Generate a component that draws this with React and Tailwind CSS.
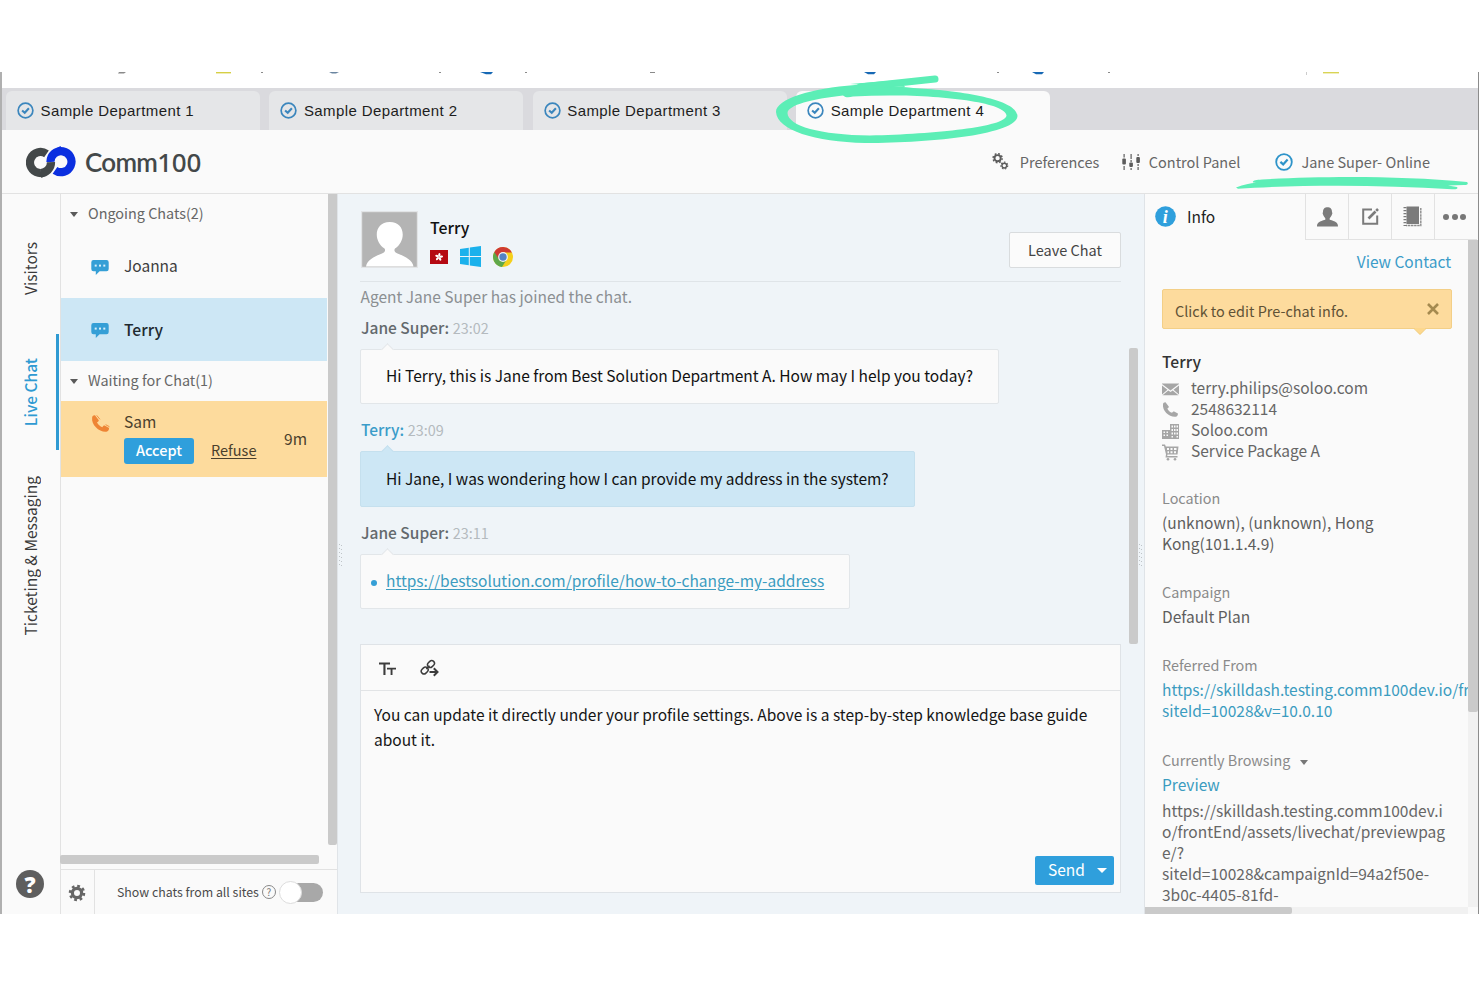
import React from "react";

const svg = "shrink-0 block";

function CheckCircle({ className }) {
  return (
    <svg viewBox="0 0 18 18" className={`${svg} ${className}`} fill="none" stroke="currentColor">
      <circle cx="9" cy="9" r="7.8" strokeWidth="1.8" />
      <path d="M5.4 8.9 L8.2 11.4 L12.6 6.6" strokeWidth="2.2" />
    </svg>
  );
}

function Gear({ cx, cy, r, w, n }) {
  const c = 2 * Math.PI * (r + w * 0.75);
  return (
    <g fill="none" stroke="currentColor">
      <circle cx={cx} cy={cy} r={r} strokeWidth={w} />
      <circle cx={cx} cy={cy} r={r + w * 0.75} strokeWidth={w * 0.8} strokeDasharray={`${c / n / 2} ${c / n / 2}`} />
    </g>
  );
}

function Logo() {
  return (
    <svg viewBox="0 0 50 33" className="block h-[33px] w-[50px] shrink-0">
      <g fill="none" strokeWidth="8.2">
        <path d="M20.5 8.9 A10.5 10.5 0 1 0 25 17.5" stroke="#434849" />
        <path d="M24.5 17 A10.5 10.5 0 0 1 35 6" stroke="#fafafa" strokeWidth="10.4" />
        <path d="M24.5 17 A10.5 10.5 0 1 1 29 25.3" stroke="#0b2fe0" />
        <path d="M14.5 28 A10.5 10.5 0 0 0 25 17.200" stroke="#fafafa" strokeWidth="10.4" />
        <path d="M14 28 A10.5 10.5 0 0 0 25 17.200" stroke="#434849" />
      </g>
      <path d="M14.5 31 L15.5 33 L20 30.5Z" fill="#434849" />
      <path d="M35.5 3 L34.5 1 L30 3.5Z" fill="#0b2fe0" />
    </svg>
  );
}

function ChatBubble() {
  return (
    <svg viewBox="0 0 18 16" className={`${svg} mt-px h-4 w-[18px]`}>
      <path d="M2.5 .5H15.5A2.2 2.2 0 0 1 17.7 2.7V9.6A2.2 2.2 0 0 1 15.5 11.8H8.6L4.8 15.4V11.8H2.5A2.2 2.2 0 0 1 .3 9.6V2.7A2.2 2.2 0 0 1 2.5 .5Z" fill="#359fd6" transform="translate(0 .5)" />
      <g fill="#d9effa">
        <rect x="3.7" y="5.6" width="2" height="2" />
        <rect x="8" y="5.6" width="2" height="2" />
        <rect x="12.3" y="5.6" width="2" height="2" />
      </g>
    </svg>
  );
}

function Phone({ className }) {
  return (
    <svg viewBox="0 0 20 20" className={`${svg} ${className}`} fill="currentColor">
      <path d="M1.2 3.6 C1.4 2.2 3 1.1 4.4 1.5 L8.2 6.6 C8.2 7.6 7.2 8.4 6.3 8.6 C7.4 11 9.6 13 12 13.9 C12.6 12.7 13.4 12 14.4 12.2 L19 14.7 C19 16.8 18 18.4 16.2 18.6 C9 19.4 0 11.5 1.2 3.6Z" />
      <path d="M6 1.4 L9.4 5.6 M15.4 11.2 L19.4 13.4" stroke="currentColor" strokeWidth="0.9" />
    </svg>
  );
}

function Caret({ className }) {
  return (
    <svg viewBox="0 0 8 4" className={`${svg} ${className}`} fill="currentColor" preserveAspectRatio="none">
      <path d="M0 0H8L4 4Z" />
    </svg>
  );
}

function TopRow() {
  return (
    <svg viewBox="0 0 1476 16" className="block h-4 w-full shrink-0">
      <path d="M117 0H124L122 1.5H116Z" fill="#8a8a8a" />
      <rect x="214" y="0" width="15" height="1.4" fill="#d6cf45" />
      <rect x="1321" y="0" width="16" height="1.4" fill="#d9d455" />
      <path d="M327 0H337L334 1.6H330Z" fill="#6a85a0" />
      <g fill="#1668b4">
        <path d="M478 0H491L489 2.2H484Z" />
        <path d="M862 0H874L872 2.2H866Z" />
        <path d="M1030 0H1042L1040 2.2H1034Z" />
      </g>
      <g fill="#8a8a8a">
        <rect x="259" width="2" height="1" />
        <rect x="437" width="2" height="1" />
        <rect x="523" width="2" height="1" />
        <rect x="648" width="5" height="1" />
        <rect x="995" width="2" height="1" />
        <rect x="1106" width="2" height="1" />
        <rect x="1304" width="1" height="3" fill="#ccc" />
      </g>
    </svg>
  );
}

const TABS = ["Sample Department 1", "Sample Department 2", "Sample Department 3", "Sample Department 4"];

function Tabs() {
  return (
    <div className="flex h-[42px] shrink-0 items-end gap-[9.4px] bg-[#dadade] pl-[4px]">
      {TABS.map((t, i) => (
        <div
          key={t}
          className={`flex h-[39px] w-[254px] shrink-0 items-center gap-[6.5px] rounded-t-[6px] pl-[11px] ${i === 3 ? "bg-[#fafafa]" : "bg-[#e5e6e8]"}`}
        >
          <CheckCircle className="size-[17px] text-[#3b86bd]" />
          <span className="pt-px font-['Liberation_Sans',sans-serif] text-[15px] tracking-[0.4px] whitespace-nowrap text-[#1d1d1d]">{t}</span>
        </div>
      ))}
    </div>
  );
}

function Header() {
  return (
    <header className="flex h-16 shrink-0 items-center border-b border-[#e2e2e2] pr-[48px] pl-[24px] text-[14.5px] text-[#666]">
      <Logo />
      <div className="mt-px ml-[9px] flex items-baseline text-[26px] leading-8 text-[#434849]">
        <span className="font-['Lato',sans-serif] font-semibold tracking-[-0.7px]">Comm</span>
        <span className="font-['Noto_Sans',sans-serif] font-medium tracking-[-0.3px]">100</span>
      </div>
      <div className="ml-auto flex items-center gap-[10.500px] leading-6">
        <svg viewBox="0 0 17 17" className={`${svg} size-[17px] text-[#5c5c5c]`}>
          <Gear cx={5.6} cy={5.2} r={3.1} w={1.9} n={8} />
          <Gear cx={12.3} cy={12.6} r={2.4} w={1.4} n={7} />
        </svg>
        <span>Preferences</span>
      </div>
      <div className="ml-[22.5px] flex items-center gap-[9px] leading-6">
        <svg viewBox="0 0 18 18" className={`${svg} size-[18px]`} fill="#5c5c5c">
          <path d="M1.500 1h1.2v3.500h-1.200zM1.500 13h1.200v4h-1.200zM8.500 1h1.200v5h-1.200zM8.500 7h1.200v2h-1.200zM8.500 15h1.200v2h-1.200zM15.500 1h1.200v2h-1.200zM15.500 11h1.200v2h-1.200zM15.500 14h1.200v3h-1.200z" />
          <rect x="0.3" y="5.500" width="3.6" height="6" rx="1" />
          <rect x="7.3" y="9.5" width="3.6" height="4.500" rx="1" />
          <rect x="14.3" y="4" width="3.6" height="6" rx="1" />
        </svg>
        <span>Control Panel</span>
      </div>
      <div className="ml-[35px] flex items-center gap-[8px] leading-6">
        <CheckCircle className="size-[18px] text-[#2d93c9]" />
        <span>Jane Super- Online</span>
      </div>
    </header>
  );
}

function RailItem({ children, className }) {
  return (
    <div className={`flex items-center justify-center border-r-[3px] pl-[2px] text-[15.5px] ${className}`}>
      <span className="rotate-180 leading-6 whitespace-nowrap [writing-mode:vertical-rl]">{children}</span>
    </div>
  );
}

function Rail() {
  return (
    <nav className="flex w-[59px] shrink-0 flex-col border-r border-[#e2e2e2] pt-[8px] pr-px">
      <RailItem className="h-[132px] border-transparent text-[#3a3a3a]">Visitors</RailItem>
      <RailItem className="h-[116px] border-[#2f9ad2] font-medium text-[#2f9ad2]">Live Chat</RailItem>
      <RailItem className="h-[211px] border-transparent text-[#3a3a3a]">Ticketing &amp; Messaging</RailItem>
      <div className="mt-auto mb-[16px] ml-[14px] flex size-7 items-center justify-center rounded-full bg-[#5e5e5e] font-['Open_Sans',sans-serif] text-[22px] leading-7 font-extrabold text-white">?</div>
    </nav>
  );
}

function GroupTitle({ children, className }) {
  return (
    <div className={`flex items-center gap-[10px] pl-[9px] text-[14.4px] text-[#666] ${className}`}>
      <Caret className="mt-[2px] h-[5px] w-2 text-[#5a5a5a]" />
      <span className="leading-6">{children}</span>
    </div>
  );
}

function ChatList() {
  return (
    <section className="flex w-[277px] shrink-0 flex-col border-r border-[#e0e4e8]">
      <div className="flex h-[651px]">
        <div className="w-[266px] shrink-0">
          <GroupTitle className="h-[41px] pb-[3px]">Ongoing Chats(2)</GroupTitle>
          <div className="flex h-[63px] items-center gap-[15px] pb-px pl-[30px] text-[15.5px] text-[#3d3d3d]">
            <ChatBubble />
            <span>Joanna</span>
          </div>
          <div className="flex h-[63px] items-center gap-[15px] bg-[#cde7f5] pl-[30px] text-[15.7px] font-medium text-[#1f2a30]">
            <ChatBubble />
            <span>Terry</span>
          </div>
          <GroupTitle className="h-[40px] pb-[2px]">Waiting for Chat(1)</GroupTitle>
          <div className="flex h-[76px] items-start bg-[#fddb9d] pr-[20px] pl-[30px] text-[#4a3f2c]">
            <Phone className="mt-[13px] size-[19px] text-[#ee8434]" />
            <div className="ml-[14px] flex-1 pt-[8px]">
              <div className="text-[15.5px] leading-[25px]">Sam</div>
              <div className="mt-[4px] flex items-center gap-[17px] text-[14.5px]">
                <span className="h-[26px] w-[70px] rounded-[3px] bg-[#2f9fdc] text-center leading-[23px] font-medium text-white">Accept</span>
                <span className="-mt-[2px] leading-[22px] underline underline-offset-2">Refuse</span>
              </div>
            </div>
            <span className="self-center text-[15.5px]">9m</span>
          </div>
        </div>
        <div className="ml-px w-[9px] rounded-b-[2px] bg-[#cacaca]" />
      </div>
      <div className="mt-[10px] -ml-px h-[9px] w-[259px] rounded-[2px] bg-[#cacaca]" />
      <div className="mt-[5px] flex flex-1 items-center border-t border-[#e2e2e2]">
        <div className="flex h-full w-[34px] items-center justify-center border-r border-[#e2e2e2]">
          <svg viewBox="0 0 18 18" className={`${svg} mt-[2px] -ml-[2px] size-[18px] text-[#666]`}>
            <Gear cx={9} cy={9} r={4.6} w={3.2} n={8} />
          </svg>
        </div>
        <span className="ml-[22px] text-[12.35px] leading-5 text-[#4a4a4a]">Show chats from all sites</span>
        <span className="ml-[3px] flex size-[14px] items-center justify-center rounded-full border border-[#888] text-[10px] leading-none text-[#777]">?</span>
        <div className="ml-[3px] flex w-[44px] items-center">
          <span className="z-10 size-[23px] shrink-0 rounded-full border border-[#ddd] bg-white" />
          <span className="-ml-[18px] h-[19px] w-[39px] rounded-full bg-[#a8a8a8]" />
        </div>
      </div>
    </section>
  );
}

function Avatar() {
  return (
    <svg viewBox="0 0 57 57" className={`${svg} size-[57px]`}>
      <rect width="57" height="57" fill="#e2e4e6" />
      <rect x="1.2" y="1.2" width="54.6" height="54.6" fill="#b4b4b4" />
      <path d="M5 55.5 C6 49 14 45 21 42.5 C24.5 41 24.5 39 23.5 37.5 C12 30 13 11 28.8 11 C44.500 11 45.500 30 34 37.500 C33 39 33 41 36.500 42.500 C43.500 45 51.500 49 52.500 55.500Z" fill="#fff" />
    </svg>
  );
}

function Flag() {
  return (
    <svg viewBox="0 0 18 14" className={`${svg} h-[14px] w-[18px]`}>
      <rect width="18" height="14" fill="#b50912" />
      <g fill="#fff">
        {[0, 72, 144, 216, 288].map((a) => (
          <ellipse key={a} cx="9" cy="4.8" rx="1.1" ry="1.9" transform={`rotate(${a + 8} 9 7)`} />
        ))}
      </g>
    </svg>
  );
}

function Chrome() {
  return (
    <svg viewBox="0 0 20 20" className={`${svg} size-[20px]`}>
      <circle cx="10" cy="10" r="10" fill="#f5cf1b" />
      <path d="M10 10 L1.340 5 A10 10 0 0 0 9 19.950 L14 12Z" fill="#5fa84a" />
      <path d="M10 10 L5.500 11.500 L1.340 5 A10 10 0 0 1 18.900 5.500 L10 5.500Z" fill="#cf3a32" />
      <circle cx="10" cy="10" r="4.900" fill="#f3f3f3" />
      <circle cx="10" cy="10" r="3.700" fill="#5482c4" />
    </svg>
  );
}

function MsgLabel({ name, time, className }) {
  return (
    <div className={`pl-px leading-[31px] ${className}`}>
      <span className="text-[15.5px] font-medium">{name}</span>{" "}
      <span className="text-[14.4px] text-[#b4babe]">{time}</span>
    </div>
  );
}

function Bubble({ children, className, tail }) {
  return (
    <div className={`relative flex items-center rounded-[2px] border pl-[25px] text-[15.5px] ${className}`}>
      <span className={`absolute -top-[5px] left-[22px] size-[9px] rotate-45 border-t border-l ${tail}`} />
      <span className="leading-6 whitespace-nowrap">{children}</span>
    </div>
  );
}

function Dots({ className }) {
  return (
    <svg viewBox="0 0 4 22" className={`absolute h-[22px] w-1 ${className}`} fill="#bfc4c8">
      {[0, 4, 8, 12, 16, 20].map((y) => (
        <g key={y}>
          <rect x="0" y={y} width="1" height="1" />
          <rect x="2" y={y + 1} width="1" height="1" />
        </g>
      ))}
    </svg>
  );
}

function Conversation() {
  return (
    <main className="relative flex w-[806px] shrink-0 flex-col bg-[#eff4f8] pl-[22px]">
      <Dots className="top-[350px] left-[1px]" />
      <Dots className="top-[350px] right-[1px]" />
      <div className="flex h-[88px] w-[761px] shrink-0 border-b border-[#dfe4e8] pt-[17px] pl-[1px]">
        <Avatar />
        <div className="ml-[12px] pt-[5px]">
          <div className="text-[15.9px] leading-6 font-medium text-[#111]">Terry</div>
          <div className="mt-[6px] flex items-center">
            <Flag />
            <svg viewBox="0 0 21 21" className={`${svg} ml-[11.5px] size-[21px]`} fill="#1bb1ec">
              <path d="M0 3L8.800 1.800V10H0ZM9.800 1.600L21 0V10H9.800ZM0 11H8.800V19.200L0 18ZM9.800 11H21V21L9.800 19.400Z" />
            </svg>
            <span className="ml-[12px]"><Chrome /></span>
          </div>
        </div>
        <button className="mt-[21px] ml-auto h-[36px] w-[112px] rounded-[2px] border border-[#d9dcde] bg-[#fbfbfb] text-[14.5px] text-[#444]">Leave Chat</button>
      </div>
      <div className="flex h-[362px] shrink-0">
        <div className="w-[761px] shrink-0">
          <div className="h-[30px] pl-[0.5px] text-[15.5px] leading-[28px] text-[#8b8f92]">Agent Jane Super has joined the chat.</div>
          <MsgLabel name="Jane Super:" time="23:02" className="h-[37px] text-[#63696d]" />
          <Bubble className="h-[55px] w-[639px] border-[#e2e6e9] bg-[#fafafa] pb-[3px] text-[#111]" tail="border-[#e2e6e9] bg-[#fafafa]">
            Hi Terry, this is Jane from Best Solution Department A. How may I help you today?
          </Bubble>
          <MsgLabel name="Terry:" time="23:09" className="h-[47px] pt-[10px] text-[#3b9cc9]" />
          <Bubble className="h-[56px] w-[555px] border-[#c5e0ee] bg-[#cde7f5] pb-[2px] text-[#111]" tail="border-[#c5e0ee] bg-[#cde7f5]">
            Hi Jane, I was wondering how I can provide my address in the system?
          </Bubble>
          <MsgLabel name="Jane Super:" time="23:11" className="h-[47px] pt-[10px] text-[#63696d]" />
          <Bubble className="h-[55px] w-[490px] border-[#e2e6e9] bg-[#fafafa] pb-[3px] text-[#3b9cc0]" tail="border-[#e2e6e9] bg-[#fafafa]">
            <span className="mr-[9px] -ml-[15px] inline-block size-[6px] rounded-full bg-[#359fd6] align-middle" />
            <span className="underline underline-offset-2">https://bestsolution.com/profile/how-to-change-my-address</span>
          </Bubble>
        </div>
        <div className="mt-[66px] ml-[8px] w-[9px] rounded-[2px] bg-[#cacaca]" />
      </div>
      <div className="flex h-[249px] w-[761px] shrink-0 flex-col border border-[#dfe3e7] bg-[#fafafa]">
        <div className="flex h-[46px] items-center gap-[23px] border-b border-[#e2e4e6] pl-[18px]">
          <svg viewBox="0 0 18 14" className={`${svg} mt-[3px] h-[14px] w-[18px]`} fill="#3c3c3c">
            <path d="M0 .5H11V2.500H6.500V13H4.400V2.500H0ZM8 5.700H17V7.500H13.500V13H11.600V7.500H8Z" />
          </svg>
          <svg viewBox="0 0 19 18" className={`${svg} mt-px h-[18px] w-[19px]`} fill="none" stroke="#3c3c3c">
            <rect x="7.300" y="2.300" width="7.400" height="5.400" rx="2.700" transform="rotate(-45 11 5)" strokeWidth="1.500" />
            <rect x="1" y="8.800" width="7.400" height="5.400" rx="2.700" transform="rotate(-45 4.700 11.500)" strokeWidth="1.500" />
            <path d="M6.300 10L9.500 6.700" strokeWidth="1.500" />
            <path d="M9.500 13H17M13.800 9.300L17.500 13L13.800 16.700" strokeWidth="2" />
          </svg>
        </div>
        <p className="px-[13px] pt-[11px] text-[15.5px] leading-[25px] whitespace-pre text-[#151515]">
          {"You can update it directly under your profile settings. Above is a step-by-step knowledge base guide\nabout it."}
        </p>
        <div className="mt-auto mr-[6px] mb-[7px] flex h-[29px] w-[79px] items-center self-end rounded-[2px] bg-[#2f9fdc] pb-[2px] pl-[13px] text-[15.5px] leading-[27px] text-white">
          <span>Send</span>
          <Caret className="mt-[2px] ml-[12px] h-[5px] w-[10px]" />
        </div>
      </div>
    </main>
  );
}

function Field({ label, children, className }) {
  return (
    <div className={className}>
      <div className="text-[14.4px] leading-[24px] text-[#8a8a8a]">{label}</div>
      {children}
    </div>
  );
}

const cell = "flex h-[46px] w-[43px] items-center justify-center border-b border-l border-[#e2e2e2]";

function ContactRow({ icon, children }) {
  return (
    <div className="flex h-[21px] items-center gap-[12px]">
      <svg viewBox="0 0 17 17" className={`${svg} mt-[3px] size-[17px] text-[#a6a6a6]`} fill="currentColor">{icon}</svg>
      <span className="leading-[21px]">{children}</span>
    </div>
  );
}

function InfoPanel() {
  return (
    <aside className="flex min-w-0 flex-1 flex-col border-l border-[#dfe3e7]">
      <div className="flex h-[46px] shrink-0">
        <div className="flex w-[160px] items-center gap-[11px] pb-px pl-[10px] text-[15.5px] text-[#222]">
          <svg viewBox="0 0 21 21" className={`${svg} size-[21px]`}>
            <circle cx="10.500" cy="10.500" r="10.300" fill="#2f9fdc" />
            <text x="10.300" y="16.500" textAnchor="middle" fill="#fff" fontFamily="Liberation Serif" fontStyle="italic" fontWeight="700" fontSize="18">i</text>
          </svg>
          <span>Info</span>
        </div>
        <div className={cell}>
          <svg viewBox="0 0 21 20" className={`${svg} h-5 w-[21px]`} fill="#7b7b7b">
            <path d="M0 19.500C0 15.500 2.500 14.500 8.300 12.800V11.300C6.500 9.500 6 7.300 5.600 6.300L6 5C6 1.500 8 .2 10.500 .2S15 1.500 15 5L15.400 6.300C15 7.300 14.500 9.500 12.700 11.300V12.800C18.500 14.500 21 15.500 21 19.500Z" />
          </svg>
        </div>
        <div className={cell}>
          <svg viewBox="0 0 17 17" className={`${svg} size-[17px]`} fill="none" stroke="#7b7b7b">
            <path d="M10 1.500H1.200V15.800H15.200V7.500" strokeWidth="2" />
            <path d="M6.500 10.500L13.500 3.500" strokeWidth="2.600" />
            <path d="M14.200 2.800L16 1" strokeWidth="2.600" />
          </svg>
        </div>
        <div className={cell}>
          <svg viewBox="0 0 20 21" className={`${svg} h-[21px] w-5`} fill="#7b7b7b">
            <rect x="3.500" y="0.500" width="12.500" height="17.500" />
            <path d="M17.800 2V19.500H3" fill="none" stroke="#8b8b8b" strokeWidth="1.400" strokeDasharray="2.500 0.600" />
            <path d="M2 1V20" stroke="#7b7b7b" strokeWidth="3" strokeDasharray="1.200 1.800" />
          </svg>
        </div>
        <div className={`${cell} gap-[2.500px] pr-[3px]`}>
          <span className="size-[6px] shrink-0 rounded-full bg-[#777]" />
          <span className="size-[6px] shrink-0 rounded-full bg-[#777]" />
          <span className="size-[6px] shrink-0 rounded-full bg-[#777]" />
        </div>
      </div>
      <div className="flex h-[667px] shrink-0">
        <div className="h-full w-[323px] overflow-hidden pl-[17px] text-[15.5px] leading-[21px] text-[#666]">
          <div className="pt-[9px] pr-[17px] text-right leading-6 text-[#3b9cc9]">View Contact</div>
          <div className="relative mt-[16px] flex h-[40px] w-[290px] items-center rounded-[2px] border border-[#f3cf87] bg-[#fddb9d] pt-[3px] pl-[12px] text-[14.45px] text-[#5f5236]">
            <span>Click to edit Pre-chat info.</span>
            <svg viewBox="0 0 12 12" className={`${svg} mt-[-4px] mr-[12px] ml-auto size-[12px]`} stroke="#a58a4f" strokeWidth="2.600">
              <path d="M1 1L11 11M11 1L1 11" />
            </svg>
            <svg viewBox="0 0 12 7" className="absolute top-[38px] right-[25px] h-[7px] w-3">
              <path d="M0 0H12L6 6.500Z" fill="#fdd88e" />
              <path d="M0 .5L6 6.500L12 .5" fill="none" stroke="#f0c76d" />
            </svg>
          </div>
          <div className="mt-[21px] text-[15.7px] leading-6 font-medium text-[#333]">Terry</div>
          <div className="mt-[3px]">
            <ContactRow icon={<><path d="M0 3V2.500H17V3L8.500 9.500Z" /><path d="M0 4.500L5.500 8.800L0 13.500ZM17 4.500L11.500 8.800L17 13.500ZM6.300 9.500L8.500 11L10.700 9.500L16.500 14.200H.5Z" /></>}>terry.philips@soloo.com</ContactRow>
            <ContactRow icon={<g transform="scale(.84) translate(0 -1)"><path d="M1.200 3.600 C1.400 2.200 3 1.100 4.400 1.500 L8.200 6.600 C8.200 7.600 7.200 8.400 6.300 8.600 C7.400 11 9.600 13 12 13.900 C12.600 12.700 13.400 12 14.400 12.200 L19 14.700 C19 16.800 18 18.400 16.200 18.600 C9 19.400 0 11.500 1.200 3.600Z" /></g>}>2548632114</ContactRow>
            <ContactRow icon={<path fillRule="evenodd" d="M8 1H17V16H0V7H8ZM9.500 2.500V4.500H11V2.500ZM12 2.500V4.500H13.500V2.500ZM14.500 2.500V4.500H16V2.500ZM9.500 6V8H11V6ZM12 6V8H13.500V6ZM14.500 6V8H16V6ZM9.500 9.500V11.500H11V9.500ZM12 9.500V11.500H13.500V9.500ZM14.500 9.500V11.500H16V9.500ZM1.500 8.500V10H3V8.500ZM4.500 8.500V10H6V8.500ZM1.500 11.500V13H3V11.500ZM4.500 11.500V13H6V11.500ZM9.500 13V14.500H11V13ZM14.500 13V14.500H16V13Z" />}>Soloo.com</ContactRow>
            <ContactRow icon={<><path fillRule="evenodd" d="M0 .5H3L3.800 2.500H16.500L15.500 10.500H5.500L5.200 12H15.500V13.500H3.500L4 10.500L2 2H0ZM5 4V6H7V4ZM8.500 4V6H10.500V4ZM12 4V6H14.500V4ZM5.500 7.300V9.200H7V7.300ZM8.500 7.300V9.200H10.500V7.300ZM12 7.300V9.200H14V7.300Z" /><circle cx="6" cy="15.200" r="1.300" /><circle cx="13" cy="15.200" r="1.300" /></>}>Service Package A</ContactRow>
          </div>
          <Field label="Location" className="mt-[25px]">
            <div className="mt-[2px] text-[#5e5e5e]">(unknown), (unknown), Hong<br />Kong(101.1.4.9)</div>
          </Field>
          <Field label="Campaign" className="mt-[26px]">
            <div className="mt-[2px] text-[#5e5e5e]">Default Plan</div>
          </Field>
          <Field label="Referred From" className="mt-[26px]">
            <div className="mt-[2px] whitespace-nowrap text-[#3b9cc0]">https://skilldash.testing.comm100dev.io/fr<br />siteId=10028&amp;v=10.0.10</div>
          </Field>
          <Field
            label={<span className="flex items-center gap-[10px]">Currently Browsing<Caret className="mt-[4px] h-[5px] w-2 text-[#777]" /></span>}
            className="mt-[27px]"
          >
            <div className="mt-[2px] text-[#3b9cc0]">Preview</div>
            <div className="mt-[5px] whitespace-nowrap text-[#666]">
              https://skilldash.testing.comm100dev.i<br />
              o/frontEnd/assets/livechat/previewpag<br />
              e/?<br />
              siteId=10028&amp;campaignId=94a2f50e-<br />
              3b0c-4405-81fd-
            </div>
          </Field>
        </div>
        <div className="flex-1 bg-[#f1f1f1]">
          <div className="h-[472px] rounded-b-[2px] bg-[#cacaca]" />
        </div>
      </div>
      <div className="h-[7px] w-[323px] bg-[#f1f1f1]">
        <div className="h-full w-[147px] rounded-r-[2px] bg-[#cacaca]" />
      </div>
    </aside>
  );
}

export default function App() {
  return (
    <div className="h-[987px] w-[1480px] overflow-hidden bg-white pt-[72px] font-['Noto_Sans_CJK_SC',sans-serif]">
      <div className="relative flex h-[842px] w-[1479px] flex-col border-r border-l-2 border-r-[#8c8c8c] border-l-[#b0b0b0]">
        <TopRow />
        <Tabs />
        <div className="flex min-h-0 flex-1 flex-col bg-[#fafafa]">
          <Header />
          <div className="flex min-h-0 flex-1">
            <Rail />
            <ChatList />
            <Conversation />
            <InfoPanel />
          </div>
        </div>
        <svg viewBox="770 72 260 76" className="pointer-events-none absolute top-0 left-[768px] h-[76px] w-[260px]" fill="#5ceeb6">
          <path
            fillRule="evenodd"
            d="M776 112 C776 99 812 88 855 85 C875 84 900 87 920 88.500 C960 91 1017 99 1017.500 116 C1017 134 935 143 865 143 C815 142 777 130 776 112Z M787.500 113 C788 105 812 99 843 95.500 C846 98 849 97.500 853 96.500 C925 92.500 1006 101 1006.500 115.500 C1006 127 935 134 870 135.500 C820 135 788 126 787.500 113Z"
          />
          <path d="M860 87 L935 79" stroke="#5ceeb6" strokeWidth="7" strokeLinecap="round" />
          <path d="M850 84 L900 80 L905 87Z" />
        </svg>
        <svg viewBox="1230 170 245 22" className="pointer-events-none absolute top-[98px] left-[1228px] h-[22px] w-[245px]" fill="#5ceeb6">
          <path d="M1236 187.500 C1244 184.500 1250 183.500 1256 182.800 L1253 182.500 C1252 180.500 1256 180 1262 179.500 C1320 176 1400 175.500 1467 182 C1469 184 1467 185 1464 185 L1448 185.500 L1457 187 C1458.500 189 1456 189.600 1452 189.300 C1380 184.500 1300 184.500 1238 188.800 Z" />
        </svg>
      </div>
    </div>
  );
}
